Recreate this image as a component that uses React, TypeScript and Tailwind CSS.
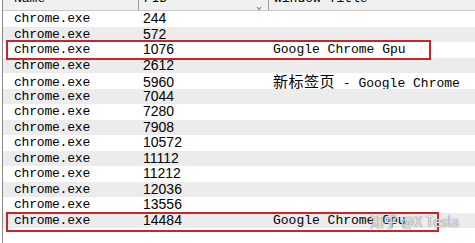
import React from 'react';

type Row = { name: string; pid: string; title?: React.ReactNode };

const rows: Row[] = [
    { name: 'chrome.exe', pid: '244' },
    { name: 'chrome.exe', pid: '572' },
    { name: 'chrome.exe', pid: '1076', title: 'Google Chrome Gpu' },
    { name: 'chrome.exe', pid: '2612' },
    {
        name: 'chrome.exe',
        pid: '5960',
        title: (
            <>
                <span className="text-[15px] tracking-[0.5px] font-['Noto_Sans_CJK_SC',sans-serif]">新标签页</span>
                <span> - Google Chrome</span>
            </>
        ),
    },
    { name: 'chrome.exe', pid: '7044' },
    { name: 'chrome.exe', pid: '7280' },
    { name: 'chrome.exe', pid: '7908' },
    { name: 'chrome.exe', pid: '10572' },
    { name: 'chrome.exe', pid: '11112' },
    { name: 'chrome.exe', pid: '11212' },
    { name: 'chrome.exe', pid: '12036' },
    { name: 'chrome.exe', pid: '13556' },
    { name: 'chrome.exe', pid: '14484', title: 'Google Chrome Gpu' },
];

const App: React.FC = () => {
    return (
        <div className="relative w-[475px] h-[243px] overflow-hidden bg-white text-black font-['Liberation_Mono',monospace] text-[13px]">
            <div className="ml-[2px] h-full border-l border-[#8a8a8a] flex flex-col">
                {/* header, cut off at the top */}
                <div className="h-[11px] shrink-0 bg-[#f0f0f0] border-b border-[#c8c8c8] grid grid-cols-[135px_130px_1fr] overflow-hidden">
                    <div className="pl-[11px] -mt-[9px] leading-[15px]">Name</div>
                    <div className="relative border-l border-[#9a9a9a] pl-[5px] -mt-[9px] leading-[15px] h-[20px]">
                        PID
                        <span className="absolute right-[6px] top-[8px] text-[10px] text-[#444]">⌄</span>
                    </div>
                    <div className="border-l border-[#9a9a9a] pl-[5px] -mt-[9px] leading-[15px] h-[20px]">Window Title</div>
                </div>

                {rows.map((r, i) => (
                    <div
                        key={r.pid}
                        className={`h-[15.5px] shrink-0 grid grid-cols-[135px_130px_1fr] items-center leading-[15px] ${i % 2 === 0 ? 'bg-white' : 'bg-[#ececec]'}`}
                    >
                        <div className="pl-[11px] tracking-[-0.2px]">{r.name}</div>
                        <div className="pl-[5px] font-['Liberation_Sans',sans-serif] text-[14px]">{r.pid}</div>
                        <div className="pl-[5px] whitespace-nowrap">{r.title}</div>
                    </div>
                ))}
            </div>

            {/* highlight boxes */}
            <div className="absolute left-[6px] top-[40px] w-[425px] h-[20px] border-2 border-[#c4262c]" />
            <div className="absolute left-[6px] top-[212px] w-[433px] h-[20px] border-2 border-[#c4262c]" />

            {/* watermark */}
            <div className="absolute left-[370px] top-[212px] text-[14px] leading-[18px] text-white/80 font-['Noto_Sans_CJK_SC',sans-serif] [text-shadow:0_0_1px_#777,0_0_1px_#777]">
                知乎 @X Tesla
            </div>
        </div>
    );
};

export default App;
